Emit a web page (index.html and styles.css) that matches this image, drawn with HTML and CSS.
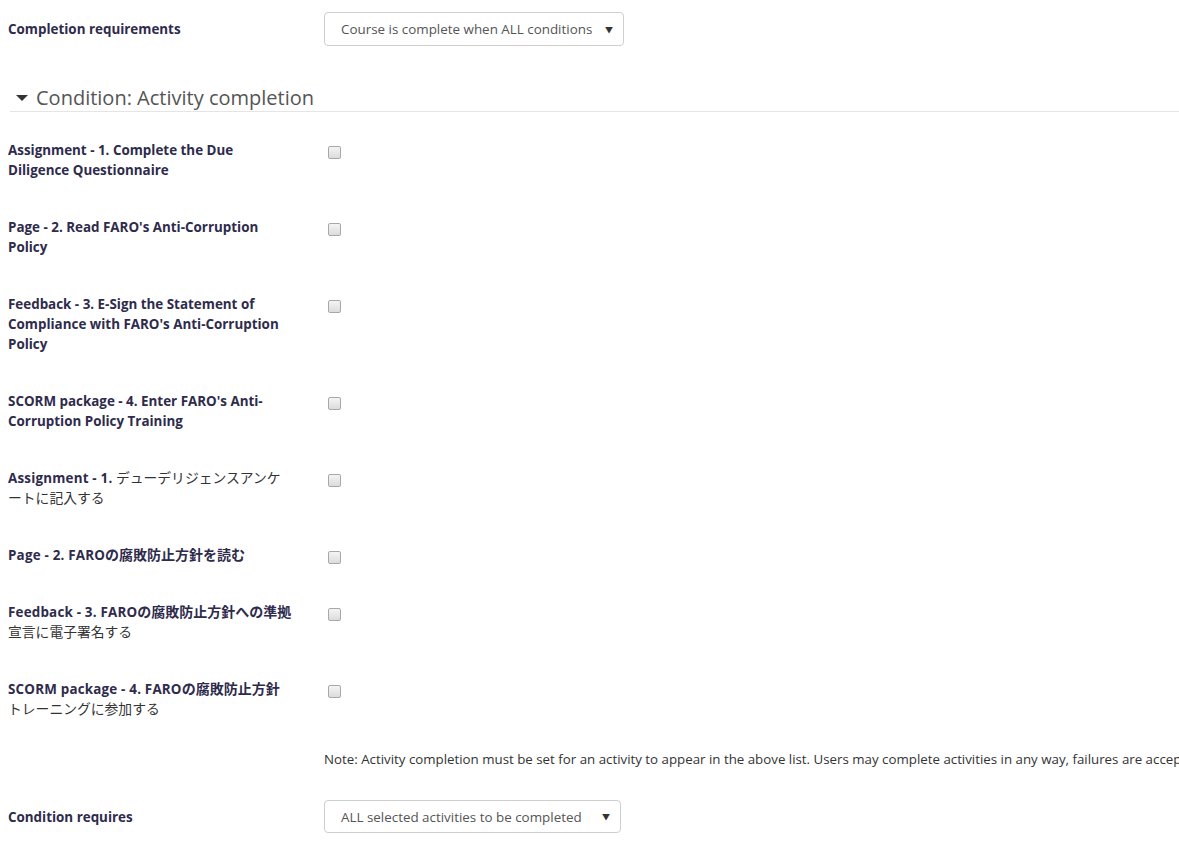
FILE: index.html
```html
<!DOCTYPE html>
<html>
<head>
<meta charset="utf-8">
<link rel="stylesheet" href="styles.css">
</head>
<body>
<div class="page">
  <div class="fitem top">
    <div class="lbl">Completion requirements</div>
    <div class="ctl"><div class="sel sel1"><span class="seltext">Course is complete when ALL conditions</span><span class="arr">&#9660;</span></div></div>
  </div>

  <div class="legend"><span class="caret"></span>Condition: Activity completion</div>

  <div class="fitem cb">
    <div class="lbl">Assignment - 1. Complete the Due<br>Diligence Questionnaire</div>
    <div class="ctl"><span class="box"></span></div>
  </div>
  <div class="fitem cb">
    <div class="lbl">Page - 2. Read FARO's Anti-Corruption<br>Policy</div>
    <div class="ctl"><span class="box"></span></div>
  </div>
  <div class="fitem cb">
    <div class="lbl">Feedback - 3. E-Sign the Statement of<br>Compliance with FARO's Anti-Corruption<br>Policy</div>
    <div class="ctl"><span class="box"></span></div>
  </div>
  <div class="fitem cb">
    <div class="lbl">SCORM package - 4. Enter FARO's Anti-<br>Corruption Policy Training</div>
    <div class="ctl"><span class="box"></span></div>
  </div>
  <div class="fitem cb">
    <div class="lbl"><span class="lat">Assignment - 1.</span> <span class="jp">デューデリジェンスアンケ<br>ートに記入する</span></div>
    <div class="ctl"><span class="box"></span></div>
  </div>
  <div class="fitem cb">
    <div class="lbl"><span class="lat">Page - 2. FARO</span><span class="jpb">の腐敗防止方針を読む</span></div>
    <div class="ctl"><span class="box"></span></div>
  </div>
  <div class="fitem cb">
    <div class="lbl"><span class="lat">Feedback - 3. FARO</span><span class="jpb">の腐敗防止方針への準拠</span><br><span class="jp">宣言に電子署名する</span></div>
    <div class="ctl"><span class="box"></span></div>
  </div>
  <div class="fitem cb">
    <div class="lbl"><span class="lat">SCORM package - 4. FARO</span><span class="jpb">の腐敗防止方針</span><br><span class="jp">トレーニングに参加する</span></div>
    <div class="ctl"><span class="box"></span></div>
  </div>

  <div class="fitem note">
    <div class="lbl"></div>
    <div class="ctl notetext">Note: Activity completion must be set for an activity to appear in the above list. Users may complete activities in any way, failures are accepted.</div>
  </div>

  <div class="fitem top">
    <div class="lbl">Condition requires</div>
    <div class="ctl"><div class="sel sel2"><span class="seltext">ALL selected activities to be completed</span><span class="arr">&#9660;</span></div></div>
  </div>
</div>
</body>
</html>
```

FILE: styles.css
```css
html, body {
  margin: 0;
  padding: 0;
  background: #fff;
  overflow: hidden;
}
body {
  font-family: "Open Sans", "Noto Sans CJK JP", sans-serif;
  font-size: 13px;
  color: #333;
}
.page {
  padding: 12px 0 0 8px;
  width: 1171px;
}
.fitem {
  display: flex;
}
.lbl {
  width: 292px;
  flex: none;
  font-weight: bold;
  font-size: 13.4px;
  color: #2e2b4c;
  line-height: 20px;
  margin-right: 24px;
  white-space: nowrap;
}
.lat {
  letter-spacing: 0.2px;
  line-height: 14px;
}
.jp {
  font-family: "Noto Sans CJK JP", sans-serif;
  font-weight: normal;
  font-size: 13.8px;
  line-height: 14px;
  color: #333;
}
.jpb {
  font-family: "Noto Sans CJK JP", sans-serif;
  font-weight: bold;
  font-size: 14px;
  line-height: 14px;
}
.ctl {
  flex: 1;
  min-width: 0;
}
.top {
  align-items: center;
}
.sel {
  box-sizing: border-box;
  height: 34px;
  border: 1px solid #cfcfcf;
  border-radius: 4px;
  display: flex;
  align-items: center;
  justify-content: space-between;
  padding: 0 10px 0 16px;
  font-size: 13.4px;
  color: #555;
}
.seltext {
  white-space: nowrap;
}
.sel1 { width: 300px; }
.sel2 { width: 297px; height: 33px; }
.arr {
  font-size: 8px;
  color: #333;
}
.legend {
  margin: 39px 0 28px 2px;
  font-size: 20px;
  line-height: 26px;
  color: #555;
  border-bottom: 1px solid #e5e5e5;
  display: flex;
  align-items: center;
}
.caret {
  width: 0;
  height: 0;
  border-left: 6px solid transparent;
  border-right: 6px solid transparent;
  border-top: 6px solid #333;
  margin: 0 8px 0 6px;
}
.cb {
  margin-bottom: 37px;
}
.box {
  display: block;
  box-sizing: border-box;
  width: 13px;
  height: 13px;
  margin: 6px 0 0 4px;
  border: 1px solid #a8a8a8;
  border-radius: 2px;
  background: linear-gradient(#f4f4f4, #dcdcdc);
}
.note {
  margin-top: -7px;
  margin-bottom: 31px;
}
.notetext {
  white-space: nowrap;
  overflow: hidden;
  line-height: 20px;
  font-size: 13.3px;
  color: #333;
}
```
